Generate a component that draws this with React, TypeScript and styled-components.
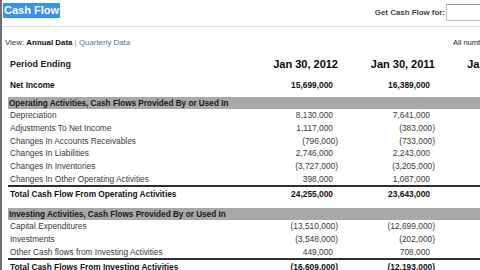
import React from 'react';
import styled, { createGlobalStyle } from 'styled-components';

const GlobalStyle = createGlobalStyle`
    html, body {
        margin: 0;
        padding: 0;
        background: #fff;
        overflow: hidden;
    }
    body {
        font-family: "Liberation Sans", Arial, sans-serif;
        color: #333;
    }
`;

const Page = styled.div`
    width: 478px;
    height: 270px;
    border-left: 2px solid #6f6f6f;
    overflow: hidden;
`;

const Header = styled.div`
    width: 490px;
    height: 26px;
    display: flex;
    justify-content: space-between;
    align-items: flex-start;
    border-bottom: 1px solid #dcdcdc;
`;

const Title = styled.h1`
    margin: 3px 0 0 1px;
    padding: 0 1px;
    height: 15px;
    line-height: 15px;
    font-size: 11px;
    font-weight: 700;
    color: #fff;
    background: #3792f4;
`;

const Lookup = styled.form`
    margin: 4px 0 0;
    display: flex;
    align-items: center;
    gap: 1px;
`;

const LookupLabel = styled.label`
    font-size: 7.9px;
    font-weight: 700;
    color: #444;
`;

const LookupInput = styled.input`
    width: 46px;
    height: 17px;
    box-sizing: border-box;
    border: 1px solid #c4c4c4;
    border-top-color: #999;
    padding: 0;
`;

const ViewRow = styled.div`
    margin-top: 9px;
    padding-left: 3px;
    height: 12px;
    display: grid;
    grid-template-columns: 448px 1fr;
    align-items: center;
    white-space: nowrap;
    font-size: 7.9px;
    color: #333;
`;

const Strong = styled.b`
    color: #111;
`;

const Sep = styled.span`
    color: #9a9a9a;
`;

const ViewLink = styled.a`
    color: #4a74b0;
    text-decoration: none;
`;

const Note = styled.span`
    font-size: 7.5px;
    color: #222;
`;

const Table = styled.div`
    margin: 6px 0 0 6px;
    width: 540px;
`;

const Row = styled.div<{ $h?: number; $top?: number; $rule?: boolean }>`
    display: grid;
    grid-template-columns: 252px 86px 97px 97px;
    align-items: center;
    height: ${p => p.$h ?? 12.7}px;
    margin-top: ${p => p.$top ?? 0}px;
    border-top: ${p => (p.$rule ? '2px solid #2e2e2e' : 'none')};
    white-space: nowrap;
`;

const SectionBar = styled(Row)`
    background: #a8a8a8;
    height: 12px;
`;

const Label = styled.div<{ $bold?: boolean }>`
    padding-left: 2px;
    font-size: 8.3px;
    font-weight: ${p => (p.$bold ? 700 : 400)};
    color: ${p => (p.$bold ? '#111' : '#3a3a3a')};
`;

const SectionTitle = styled.div`
    padding-left: 1px;
    font-size: 8.2px;
    font-weight: 700;
    color: #1a1a1a;
`;

const HeadLabel = styled.div`
    padding-left: 2px;
    font-size: 9px;
    font-weight: 700;
    color: #222;
`;

const DateCell = styled.div`
    text-align: right;
    padding-right: 8px;
    font-size: 11px;
    font-weight: 700;
    color: #0a0a0a;
`;

const Value = styled.div<{ $bold?: boolean; $neg?: boolean }>`
    text-align: right;
    padding-right: ${p => (p.$neg ? 8 : 13)}px;
    font-size: 8.4px;
    font-weight: ${p => (p.$bold ? 700 : 400)};
    color: ${p => (p.$bold ? '#111' : '#3a3a3a')};
`;

type Line = { label: string; values: string[] };

const operating: Line[] = [
    { label: 'Depreciation', values: ['8,130,000', '7,641,000'] },
    { label: 'Adjustments To Net Income', values: ['1,117,000', '(383,000)'] },
    { label: 'Changes In Accounts Receivables', values: ['(796,000)', '(733,000)'] },
    { label: 'Changes In Liabilities', values: ['2,746,000', '2,243,000'] },
    { label: 'Changes In Inventories', values: ['(3,727,000)', '(3,205,000)'] },
    { label: 'Changes In Other Operating Activities', values: ['398,000', '1,087,000'] }
];

const investing: Line[] = [
    { label: 'Capital Expenditures', values: ['(13,510,000)', '(12,699,000)'] },
    { label: 'Investments', values: ['(3,548,000)', '(202,000)'] },
    { label: 'Other Cash flows from Investing Activities', values: ['449,000', '708,000'] }
];

const isNeg = (v: string) => v.startsWith('(');

const Values = ({ values, bold }: { values: string[]; bold?: boolean }) => (
    <>
        {values.map((v, i) => (
            <Value key={i} $bold={bold} $neg={isNeg(v)}>
                {v}
            </Value>
        ))}
        <div />
    </>
);

const App = () => (
    <Page>
        <GlobalStyle />
        <Header>
            <Title>Cash Flow</Title>
            <Lookup onSubmit={e => e.preventDefault()}>
                <LookupLabel>Get Cash Flow for:</LookupLabel>
                <LookupInput type="text" />
            </Lookup>
        </Header>
        <ViewRow>
            <span>
                View: <Strong>Annual Data</Strong> <Sep>|</Sep>{' '}
                <ViewLink href="#">Quarterly Data</ViewLink>
            </span>
            <Note>All numbers in Thousands</Note>
        </ViewRow>
        <Table>
            <Row $h={20}>
                <HeadLabel>Period Ending</HeadLabel>
                <DateCell>Jan 30, 2012</DateCell>
                <DateCell>Jan 30, 2011</DateCell>
                <DateCell>Jan 31, 2010</DateCell>
            </Row>
            <Row $h={14} $top={4}>
                <Label $bold>Net Income</Label>
                <Values values={['15,699,000', '16,389,000']} bold />
            </Row>
            <SectionBar $top={5}>
                <SectionTitle>Operating Activities, Cash Flows Provided By or Used In</SectionTitle>
            </SectionBar>
            {operating.map(l => (
                <Row key={l.label}>
                    <Label>{l.label}</Label>
                    <Values values={l.values} />
                </Row>
            ))}
            <Row $rule $h={13}>
                <Label $bold>Total Cash Flow From Operating Activities</Label>
                <Values values={['24,255,000', '23,643,000']} bold />
            </Row>
            <SectionBar $top={8}>
                <SectionTitle>Investing Activities, Cash Flows Provided By or Used In</SectionTitle>
            </SectionBar>
            {investing.map(l => (
                <Row key={l.label}>
                    <Label>{l.label}</Label>
                    <Values values={l.values} />
                </Row>
            ))}
            <Row $rule $h={13}>
                <Label $bold>Total Cash Flows From Investing Activities</Label>
                <Values values={['(16,609,000)', '(12,193,000)']} bold />
            </Row>
        </Table>
    </Page>
);

export default App;
